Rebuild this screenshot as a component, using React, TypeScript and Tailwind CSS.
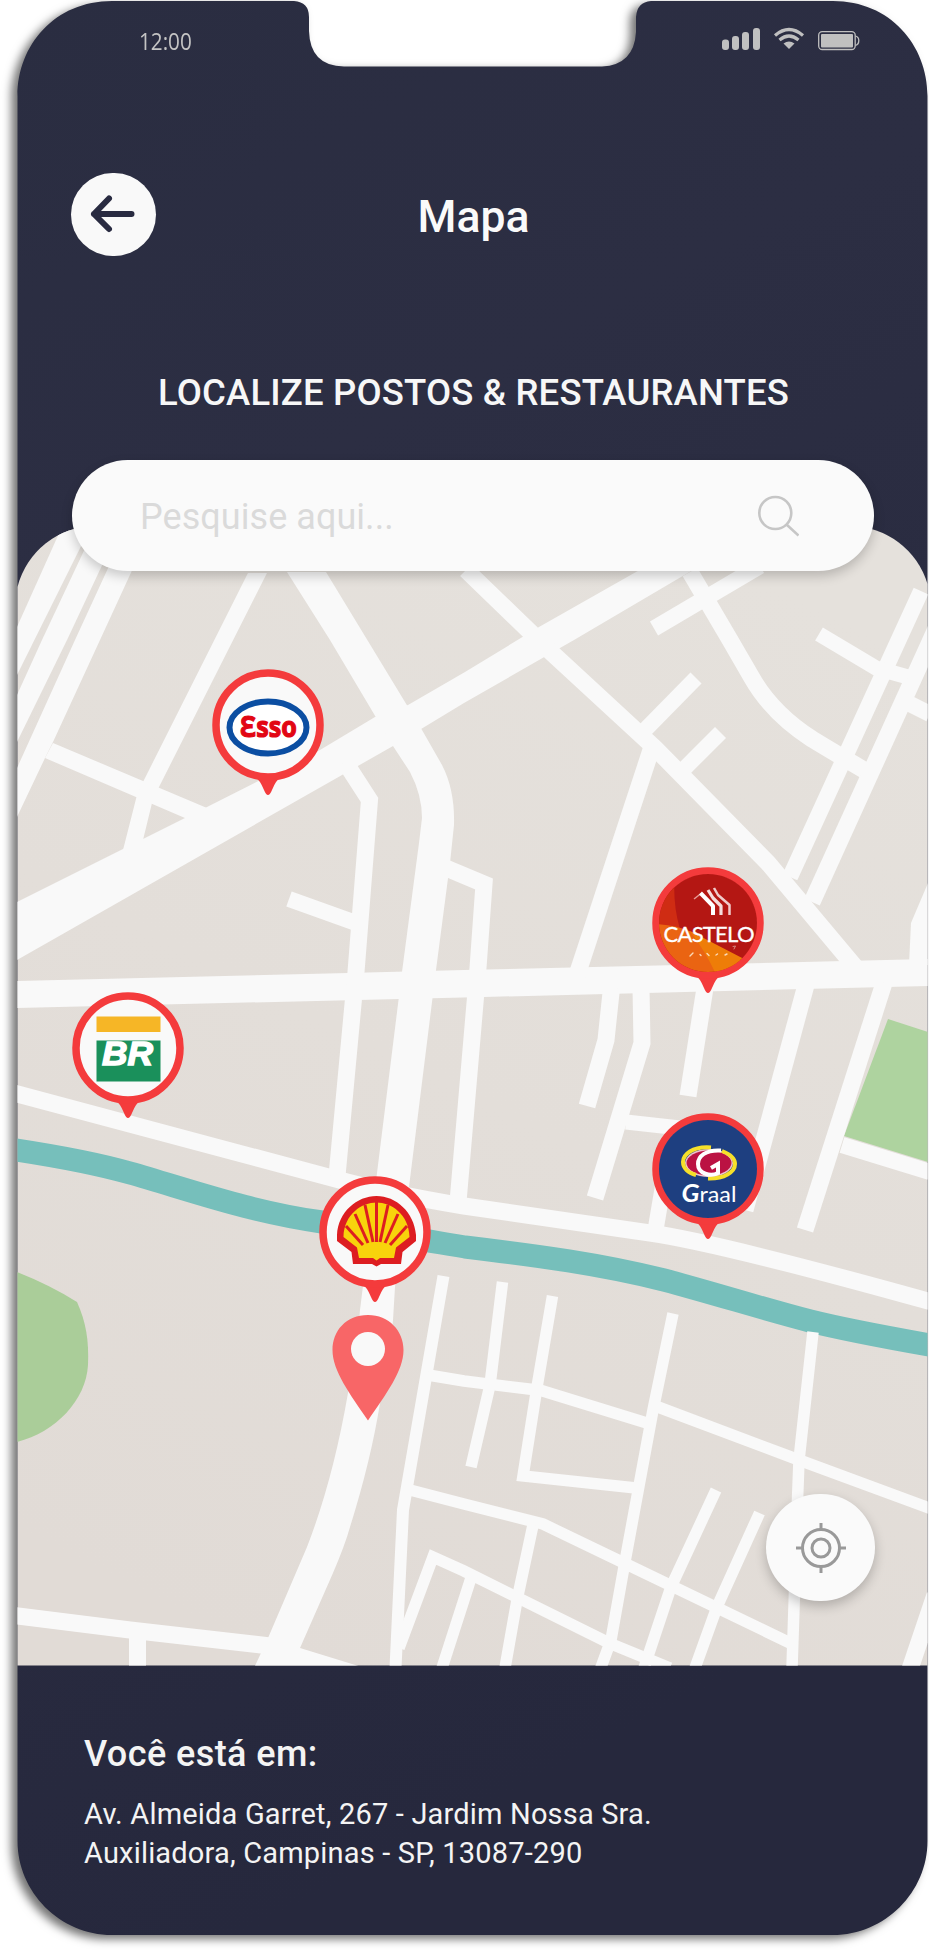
import React from "react";

const ROAD = "#f9f9f9";

function PhoneBody() {
  return (
    <svg
      className="absolute inset-0 h-[1953px] w-[929px] drop-shadow-[-6px_4px_5px_rgba(0,0,0,0.55)]"
      viewBox="0 0 929 1953"
      aria-hidden="true"
    >
      <defs>
        <linearGradient id="body" x1="0" y1="0" x2="0.25" y2="1">
          <stop offset="0" stopColor="#2a2d41" />
          <stop offset="0.3" stopColor="#2c2e43" />
          <stop offset="1" stopColor="#26283d" />
        </linearGradient>
      </defs>
      <path
        fill="url(#body)"
        d="M112 1 H294 Q309 2 309 17 V31 Q310 66 344 66.500 H602 Q634 65 636 32 V17 Q637 2 651 1 H833 C890 1 927.500 45 927.500 96 V1841 C927.500 1892 885 1935 833 1935 H112 C60 1935 17.500 1892 17.500 1841 V96 C17.500 45 55 1 112 1 Z"
      />
    </svg>
  );
}

function StatusIcons() {
  return (
    <svg className="h-6 w-[140px]" viewBox="721 27 140 24" aria-hidden="true">
      <g fill="#c0c0c0">
        <rect x="722" y="39.500" width="7" height="10.500" rx="3" />
        <rect x="732" y="36" width="7" height="14" rx="3" />
        <rect x="742" y="32" width="7" height="18" rx="3" />
        <rect x="753" y="28" width="7" height="22" rx="3" />
        <path d="M789 49 L783.500 43.500 Q789 39.500 794.500 43.500 Z" />
        <rect x="821" y="34" width="32" height="13.500" rx="1" />
      </g>
      <g fill="none" stroke="#c0c0c0">
        <path d="M775 35.500 Q789 23.500 803 35.500" strokeWidth="3.200" />
        <path d="M779.500 40 Q789 32 798.500 40" strokeWidth="3.200" />
        <rect x="818.700" y="31.700" width="36.500" height="17.800" rx="3.500" strokeWidth="1.300" />
        <path d="M855.500 36 Q858.800 37 858.800 40.500 Q858.800 44.500 855.500 45.500" strokeWidth="1.300" />
      </g>
    </svg>
  );
}

function StreetMap() {
  return (
    <svg className="block h-[1141px] w-[911px]" viewBox="17 525 911 1141" aria-hidden="true">
      <defs>
        <clipPath id="mapClip">
          <path d="M17.500 1665.500 V587 A81 81 0 0 1 95 526 H850 A81 81 0 0 1 927.500 584 V1665.500 Z" />
        </clipPath>
        <linearGradient id="land" x1="0.7" y1="0" x2="0.3" y2="1">
          <stop offset="0" stopColor="#e5e1dc" />
          <stop offset="1" stopColor="#e1dbd6" />
        </linearGradient>
      </defs>
      <g clipPath="url(#mapClip)">
        <rect x="17" y="525" width="911" height="1141" fill="url(#land)" />

        <path fill="#aacd99" d="M17 1272 Q50 1285 77 1302 C86 1322 89 1340 88 1365 C86 1400 56 1432 17 1442 Z" />
        <path fill="#aed39f" d="M888 1019 L928 1032 V1162 L844 1136 Z" />

        <g fill={ROAD}>
          <path d="M65 520 L17 627 V675 L94 520 Z" />
          <path d="M97 523 L42 640 L17 695 V742 L67 640 L120 527 Z" />
          <path d="M127 527 L75 640 L17 768 V817 L45 758 L53 742 L100 640 L152 527 Z" />
          <path d="M53 743 L207 808 L215 832 L185 818 L45 758 Z" />
          <path d="M248 573 L144 780 L137 795 L123 850 L133 865 L143 840 L152 803 L159 787 L267 573 Z" />
          <path d="M17 902 L123 849 L207 807 L320 750 L375 717 L408 705 L465 672 L539 627 L636 572 L720 525 L765 528 L681 577 L574 640 L464 703 L393 746 L17 960 Z" />
          <path d="M287 572 L330 640 L393 746 L410 772 Q422 795 422 818 L419 843 L402 972 L377 1173 L360 1310 Q357 1355 348 1393 Q333 1480 307 1547 L268 1638 L254 1668 L365 1668 L300 1648 L333 1573 Q345 1545 350 1527 Q371 1460 380 1403 Q391 1345 393 1320 L395 1287 L409 1187 L436 970 L450 863 L454 825 Q455 790 442 765 L422 730 L326 572 Z" />
          <path d="M17 981 L348 973 L464 970 L844 961 L928 959 V986 L484 997 L17 1008 Z" />
          <path d="M928 883 L911 923 L909 965 H928 Z" />
        </g>

        <path
          d="M10 1149 C50 1155 95 1163 130 1173 C190 1190 250 1212 322 1222 C380 1232 420 1240 465 1247 C540 1256 600 1264 664 1280 C720 1295 760 1308 810 1321 C850 1331 890 1338 935 1346"
          fill="none"
          stroke="#76bfbb"
          strokeWidth="23"
        />

        <g fill="none" stroke={ROAD} strokeWidth="17">
          <path d="M10 1092 L332 1178 Q390 1194 464 1206 L650 1233 Q720 1243 935 1303" />
          <path d="M345 762 L369.500 800 L356 972 L337 1176" />
          <path d="M289 899 L356 923" strokeWidth="16" />
          <path d="M446 868 L484 884 L478 968 L458 1202" />
          <path d="M466 570 L552 653 L655 748 L768 863 L856 968" />
          <path d="M641 734 L696 678" strokeWidth="15.500" />
          <path d="M683 770 L720.500 732.500" strokeWidth="15.500" />
          <path d="M651 750 L577 975" />
          <path d="M654 628.500 L760 566" strokeWidth="16" />
          <path d="M690 572 L730 640 L752 678 Q772 713 812 739 Q830 750 864 770" />
          <path d="M921 591 L790 877" strokeWidth="16" />
          <path d="M940 620 L812 902" />
          <path d="M819 634 L876 668 L908 677" strokeWidth="15" />
          <path d="M906 702 L930 714" strokeWidth="16" />
          <path d="M611.500 988 L606 1040 L587 1106" />
          <path d="M641 988 L642 1043 L595 1198" />
          <path d="M626 1122 L680 1128" strokeWidth="15" />
          <path d="M705 988 L688 1096" />
          <path d="M806 985 L745 1210" />
          <path d="M884 983 L805 1230" />
          <path d="M842 1145 L930 1172" strokeWidth="16" />
          <path d="M664 1180 L655 1233" strokeWidth="16" />
          <path d="M935 1595 L909 1672" />
          <path d="M10 1615 L130 1630 L270 1646" />
          <path d="M137.500 1632 V1668" />
        </g>

        <g fill="none" stroke={ROAD} strokeWidth="11.500">
          <path d="M443.500 1276 L403 1510 L395.500 1668" strokeWidth="12" />
          <path d="M428 1375 L464 1381 L541 1390.500 L650 1424" />
          <path d="M502.500 1282 L490 1385 L471 1467" />
          <path d="M552.500 1296 L537 1387 L523 1476 L636 1488" />
          <path d="M673 1313.500 L653 1410 L624 1567 L611 1640 L600 1670" />
          <path d="M658 1407 L799 1460 L932 1509" />
          <path d="M813 1332 L799 1460 L797.500 1500 L792 1668" />
          <path d="M410 1490 L464 1504 L543 1524 L624 1563 L790 1643" />
          <path d="M533 1525 L517 1600 L505 1668" />
          <path d="M399 1648 L433 1557 L464 1571 L609 1643 L670 1668" />
          <path d="M471 1578 L442 1668" />
          <path d="M716 1490 L671 1587 L644 1668" />
          <path d="M759.500 1513 L717 1607 L695 1668" />
        </g>
      </g>
    </svg>
  );
}

function EssoLogo() {
  return (
    <g>
      <ellipse cx="56" cy="58.500" rx="38.500" ry="26" fill="#fff" stroke="#0b4ea2" strokeWidth="6" />
      <text
        x="28"
        y="67.500"
        textLength="57"
        lengthAdjust="spacingAndGlyphs"
        fill="#e20613"
        stroke="#e20613"
        strokeWidth="1.200"
        className="font-['Noto_Sans',sans-serif] text-[29px] font-bold"
      >
        Ɛsso
      </text>
    </g>
  );
}

function BrLogo() {
  return (
    <g>
      <rect x="24.500" y="24.500" width="64" height="15.500" fill="#f6b626" />
      <rect x="24.500" y="48.500" width="64" height="41" fill="#1a905b" />
      <text
        x="30"
        y="72.500"
        textLength="51"
        lengthAdjust="spacingAndGlyphs"
        fill="#fff"
        stroke="#fff"
        strokeWidth="1.400"
        className="font-['Liberation_Sans',sans-serif] text-[33px] font-bold italic"
      >
        BR
      </text>
    </g>
  );
}

function ShellLogo() {
  const ribs: [number, number, number, number][] = [
    [27, 50, 44, 69],
    [36, 38, 49, 67],
    [46, 29, 54, 66],
    [57.5, 26, 57.5, 66],
    [69, 29, 61, 66],
    [79, 38, 66, 67],
    [88, 50, 71, 69],
  ];
  return (
    <g>
      <path
        fill="#dd1d21"
        d="M57.500 20 C38 20 19 36 18 59 V65 L32.500 76 L34 88 H53 L57.500 90.500 L62 88 H82 L83.500 76 L97 65 V59 C95 36 77 20 57.500 20 Z"
      />
      <path
        fill="#f8d30c"
        d="M57.500 26.500 C43 26.500 25 38 24.500 61 L38 71.500 L40 82 H54 L57.500 84.500 L61 82 H75 L77 71.500 L90.500 61 C90 38 72 26.500 57.500 26.500 Z"
      />
      <g stroke="#dd1d21" strokeWidth="3">
        {ribs.map(([x1, y1, x2, y2]) => (
          <line key={x1} x1={x1} y1={y1} x2={x2} y2={y2} />
        ))}
      </g>
    </g>
  );
}

function CasteloLogo() {
  return (
    <g>
      <defs>
        <clipPath id="casteloClip">
          <circle cx="56" cy="56" r="49" />
        </clipPath>
      </defs>
      <g clipPath="url(#casteloClip)">
        <rect width="112" height="112" fill="#b41713" />
        <path fill="#cf2c13" d="M0 0 H23 Q20 36 28 62 L0 60 Z" />
        <path fill="#ea6412" d="M0 57 Q22 57 40 65 L91 95 L70 112 H0 Z" />
        <path fill="#ee7d08" d="M38 64 L94 93 L80 112 H66 Q56 88 38 64 Z" />
      </g>
      <g fill="none" stroke="#fff" strokeLinejoin="round">
        <path d="M42 32 L49 26.500" strokeWidth="1.500" stroke="#e59a96" />
        <path d="M48.500 26 L61 39 V48" strokeWidth="4" />
        <path d="M56 23 L61 31 L69 39 V48" strokeWidth="3.200" stroke="#f6dddc" />
        <path d="M62 21 L66 28 L77.500 38 V48" strokeWidth="2.500" stroke="#f0cbca" />
      </g>
      <text
        x="11.500"
        y="74.500"
        textLength="91"
        fill="#fff"
        stroke="#fff"
        strokeWidth="0.300"
        className="font-[Lato,sans-serif] text-[22px]"
      >
        CASTELO
      </text>
      <g stroke="#fbd9b8" strokeWidth="1.400" strokeLinecap="round" fill="none">
        <path d="M38 89 L41 86 M48 87.500 L49 88.500 M55 86.500 L57 88.500 M64 88 L65.500 87 M73 88 L75 87" />
        <path d="M81 79.500 L83.500 79 L82 82" strokeWidth="1" stroke="#d98a80" />
      </g>
    </g>
  );
}

function GraalLogo() {
  return (
    <g>
      <circle cx="56" cy="56" r="49" fill="#1e3f80" />
      <ellipse cx="57" cy="50" rx="24" ry="14" fill="#eec3cb" />
      <ellipse cx="57" cy="50" rx="22.500" ry="12.500" fill="#bb1243" />
      <g fill="none" stroke="#f6e02a" strokeWidth="4">
        <path d="M59 34.500 C40 33 31 42 31 49 C31 55 36 60 44 62" />
        <path d="M70 38 C78 41 83 45 83 51 C83 59 72 66 56 65.500" />
      </g>
      <path d="M69 37.500 C54 36.500 46 43 46 51 C46 61 59 64 66 60 V51 L59 55" fill="none" stroke="#fff" strokeWidth="4" />
      <text
        x="29.500"
        y="88.500"
        fill="#fff"
        textLength="55"
        lengthAdjust="spacingAndGlyphs"
        className="font-[Lato,sans-serif]"
      >
        <tspan className="text-[25px] font-bold italic">G</tspan>
        <tspan className="text-[22px]">raal</tspan>
      </text>
    </g>
  );
}

function StationPin({ left, top, label, children }: { left: string; top: string; label: string; children: React.ReactNode }) {
  return (
    <button type="button" aria-label={label} className={`absolute h-[128px] w-[112px] ${left} ${top}`}>
      <svg className="h-[128px] w-[112px]" viewBox="0 0 112 128">
        <path fill="#f43b3c" d="M43 108 Q48 111 52 121 Q56 131 60 121 Q64 111 69 108 Z" />
        <circle cx="56" cy="56" r="52" fill="#f9f9f9" stroke="#f43b3c" strokeWidth="7.500" />
        {children}
      </svg>
    </button>
  );
}

export default function App() {
  return (
    <div className="relative h-[1953px] w-[929px] overflow-hidden bg-white font-[Roboto,sans-serif]">
      <PhoneBody />

      <div className="relative flex h-[1935px] flex-col pr-[1px] pl-[17px]">
        <header className="flex h-[460px] flex-col">
          <div className="flex h-[78px] items-center justify-between pr-[67px] pl-[122px]">
            <span className="mt-1 origin-left scale-x-90 font-['Open_Sans',sans-serif] text-[23px] leading-7 font-normal text-[#c4c4c4]">
              12:00
            </span>
            <StatusIcons />
          </div>

          <div className="mt-[95px] grid h-[83px] grid-cols-[85px_1fr_85px] items-center px-[54px]">
            <button
              type="button"
              aria-label="Voltar"
              className="flex h-[83px] w-[85px] items-center justify-center rounded-full bg-[#f9f9f9]"
            >
              <svg className="h-[83px] w-[85px]" viewBox="71 172.500 85 83" fill="none" stroke="#292b41" strokeWidth="6" strokeLinecap="round" strokeLinejoin="round">
                <path d="M94 213.500 H131.500 M109 198 L94 213.500 L109 228.500" />
              </svg>
            </button>
            <h1 className="mt-[5px] pl-0.5 text-center text-[44.5px] leading-[52px] font-medium text-[#fafafa]">Mapa</h1>
          </div>

          <h2 className="mt-[115px] pl-0.5 text-center text-[36.5px] leading-[44px] font-medium tracking-[0.16px] whitespace-nowrap text-[#f7f7f7]">
            LOCALIZE POSTOS &amp; RESTAURANTES
          </h2>
        </header>

        <div className="relative z-10 mx-[55px] flex h-[111px] w-[802px] shrink-0 items-center justify-between rounded-full bg-[#fafafa] pr-[75px] pl-[68px] shadow-[0_5px_12px_rgba(0,0,0,0.2)]">
          <span className="pt-0.5 text-[36px] leading-none font-normal tracking-[0.05px] whitespace-nowrap text-[#dadada]">Pesquise aqui...</span>
          <svg className="h-[42px] w-[42px]" viewBox="757 495 42 42" fill="none" stroke="#c6c6c6" strokeWidth="2.600">
            <circle cx="775.300" cy="513" r="16" />
            <path d="M786.500 524.500 L798.500 535.500" />
          </svg>
        </div>

        <main className="relative -mt-[46px] h-[1141px] w-[911px] shrink-0">
          <StreetMap />
          <StationPin label="Esso" left="left-[195px]" top="top-[144px]">
            <EssoLogo />
          </StationPin>
          <StationPin label="Castelo" left="left-[635px]" top="top-[342px]">
            <CasteloLogo />
          </StationPin>
          <StationPin label="Petrobras" left="left-[55px]" top="top-[467px]">
            <BrLogo />
          </StationPin>
          <StationPin label="Graal" left="left-[635px]" top="top-[588px]">
            <GraalLogo />
          </StationPin>
          <StationPin label="Shell" left="left-[302px]" top="top-[651px]">
            <ShellLogo />
          </StationPin>

          <svg className="absolute top-[789px] left-[314px] h-[108px] w-[74px]" viewBox="331 1314 74 108" aria-hidden="true">
            <path fill="#f86667" d="M368 1315 C346 1315 332.500 1331 332.500 1350 C332.500 1371 350 1394 368 1420.500 C386 1394 403.500 1371 403.500 1350 C403.500 1331 389 1315 368 1315 Z" />
            <circle cx="368" cy="1349" r="17" fill="#f9f9f9" />
          </svg>

          <button
            type="button"
            aria-label="Minha localização"
            className="absolute top-[969px] left-[749px] flex h-[107px] w-[109px] items-center justify-center rounded-full bg-[#fafafa] shadow-[0_5px_12px_rgba(0,0,0,0.22)]"
          >
            <svg className="h-[52px] w-[52px]" viewBox="-26 -26 52 52" fill="none" stroke="#999999" strokeWidth="3">
              <circle r="18.500" />
              <circle r="9" />
              <path d="M0 -25 V-18 M0 18 V25 M-25 0 H-18 M18 0 H25" />
            </svg>
          </button>
        </main>

        <footer className="flex flex-col pt-[65px] pl-[67px] text-[#f4f4f4]">
          <p className="text-[36px] leading-[46px] font-medium tracking-[0.42px] whitespace-nowrap">Você está em:</p>
          <p className="mt-[18px] text-[29px] leading-[38.5px] tracking-[0.18px] whitespace-nowrap">
            Av. Almeida Garret, 267 - Jardim Nossa Sra.
            <br />
            Auxiliadora, Campinas - SP, 13087-290
          </p>
        </footer>
      </div>
    </div>
  );
}
